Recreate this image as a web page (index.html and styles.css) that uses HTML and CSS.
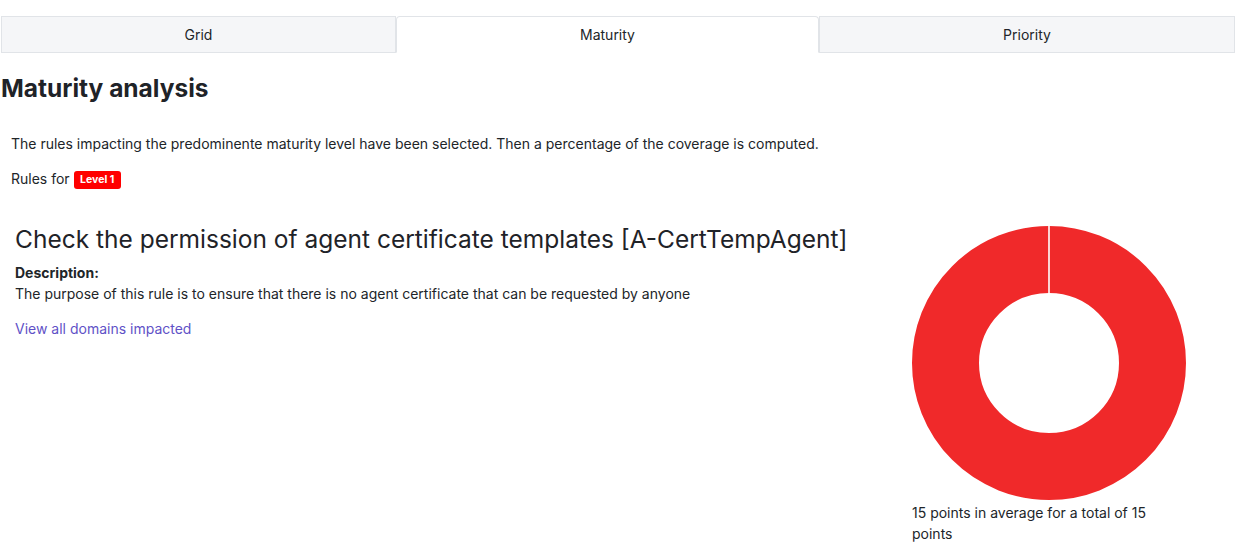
FILE: index.html
```html
<!DOCTYPE html>
<html lang="en">
<head>
    <meta charset="UTF-8">
    <meta name="viewport" content="width=device-width, initial-scale=1.0">
    <title>Maturity analysis</title>
    <link rel="stylesheet" href="styles.css">
</head>
<body>
    <div class="page">
        <!-- tabs -->
        <nav class="tabs">
            <div class="tab">Grid</div>
            <div class="tab active">Maturity</div>
            <div class="tab">Priority</div>
        </nav>

        <h2 class="page-title">Maturity analysis</h2>

        <div class="intro">
            <p class="intro-text">The rules impacting the predominente maturity level have been selected. Then a percentage of the coverage is computed.</p>
            <p class="rules-for">Rules for <span class="badge">Level 1</span></p>
        </div>

        <!-- rule + chart -->
        <div class="rule-row">
            <div class="rule-col">
                <h3 class="rule-title">Check the permission of agent certificate templates [A-CertTempAgent]</h3>
                <div class="rule-label">Description:</div>
                <div class="rule-desc">The purpose of this rule is to ensure that there is no agent certificate that can be requested by anyone</div>
                <a class="rule-link" href="#">View all domains impacted</a>
            </div>
            <div class="chart-col">
                <svg class="donut" width="274" height="274" viewBox="0 0 274 274">
                    <circle cx="137" cy="137" r="103.5" fill="none" stroke="#f0292a" stroke-width="67"/>
                    <line x1="137" y1="0" x2="137" y2="68" stroke="#ffffff" stroke-width="1.6"/>
                </svg>
                <div class="chart-caption">15 points in average for a total of 15 points</div>
            </div>
        </div>
    </div>
</body>
</html>
```

FILE: styles.css
```css
* {
    margin: 0;
    padding: 0;
    box-sizing: border-box;
}

body {
    background-color: #ffffff;
    color: #212529;
    font-family: Inter, 'Noto Sans', sans-serif;
    font-size: 14px;
    line-height: 21px;
}

.page {
    padding: 16px 15px 0 1px;
}

/* tabs */
.tabs {
    display: grid;
    grid-template-columns: 395px 423px 416px;
}

.tab {
    height: 37px;
    display: flex;
    align-items: center;
    justify-content: center;
    background-color: #f5f6f8;
    border: 1px solid #e1e4e8;
    color: #212529;
    font-size: 14px;
}

.tab.active {
    background-color: #ffffff;
    border-bottom-color: #ffffff;
    border-radius: 4px 4px 0 0;
}

.page-title {
    margin-top: 21px;
    font-size: 24.5px;
    line-height: 29px;
    font-weight: 700;
    color: #1f2328;
}

/* intro */
.intro {
    padding-left: 10px;
    margin-top: 30px;
}

.intro-text {
    margin-bottom: 14px;
}

.rules-for {
    display: flex;
    align-items: center;
    gap: 4px;
}

.badge {
    display: inline-block;
    height: 18px;
    padding: 0 6.5px;
    margin-top: 2px;
    background-color: #ff0000;
    color: #ffffff;
    border-radius: 3px;
    font-size: 10.5px;
    font-weight: 700;
    line-height: 18px;
}

/* rule + chart */
.rule-row {
    display: flex;
    margin-top: 36px;
    margin-left: -1px;
}

.rule-col {
    width: 912px;
    padding-left: 15px;
}

.rule-title {
    font-size: 24.5px;
    line-height: 29px;
    font-weight: 400;
    color: #1f2328;
    margin-bottom: 8px;
}

.rule-label {
    font-weight: 700;
}

.rule-link {
    display: inline-block;
    margin-top: 14px;
    color: #5f52c7;
    text-decoration: none;
}

.chart-col {
    width: 274px;
    padding-top: 1px;
}

.donut {
    display: block;
}

.chart-caption {
    margin-top: 2px;
}
```
